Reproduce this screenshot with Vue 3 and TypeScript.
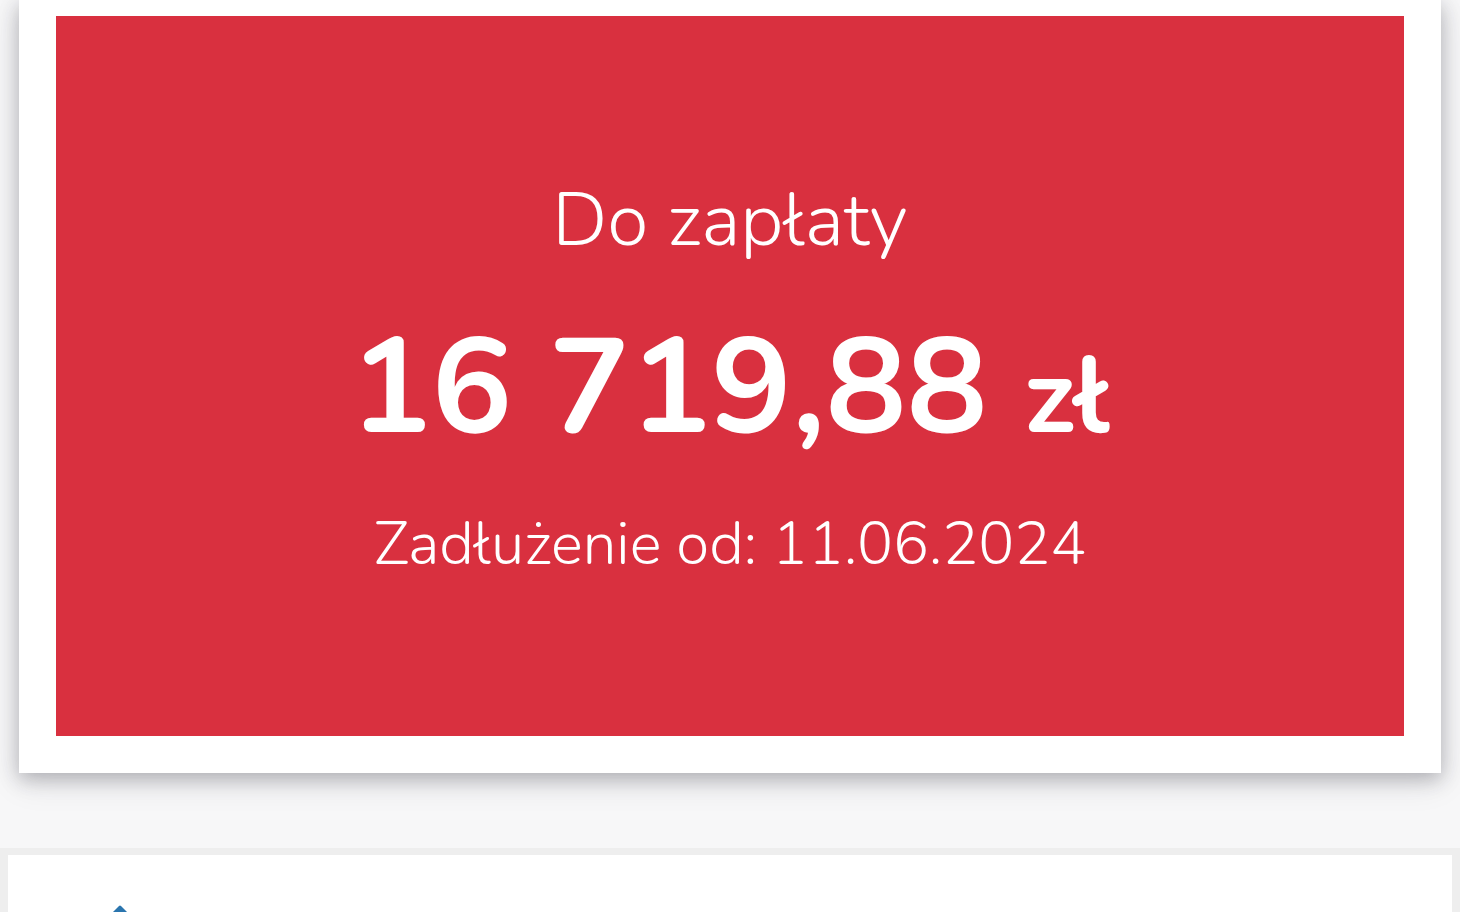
<script setup lang="ts">
interface Balance {
  label: string
  amount: string
  currency: string
  dueLabel: string
  dueDate: string
  dueIso: string
}

const balance: Balance = {
  label: 'Do zapłaty',
  amount: '16 719,88',
  currency: 'zł',
  dueLabel: 'Zadłużenie od:',
  dueDate: '11.06.2024',
  dueIso: '2024-06-11',
}
</script>

<template>
  <main class="page">
    <section class="card">
      <div class="balance">
        <h1 class="label">{{ balance.label }}</h1>
        <p class="amount">
          {{ balance.amount }} <span class="currency">{{ balance.currency }}</span>
        </p>
        <p class="due">
          {{ balance.dueLabel }} <time :datetime="balance.dueIso">{{ balance.dueDate }}</time>
        </p>
      </div>
    </section>
    <section class="next">
      <svg class="icon" viewBox="0 0 80 80" aria-hidden="true">
        <path d="M39 1 Q40 0 41 1 L80 40 L40 80 L0 40 Z" fill="#2a75ae" />
      </svg>
    </section>
  </main>
</template>

<style>
body {
  margin: 0;
  background: #f7f7f8;
}
</style>

<style scoped>
.page {
  display: flex;
  flex-direction: column;
  gap: 75px;
  height: 100vh;
  overflow: hidden;
  font-family: Nunito, Lato, "Open Sans", sans-serif;
  color: #fff;
}

.card {
  flex: none;
  margin: 0 19px;
  padding: 16px 37px 37px;
  background: #fff;
  box-shadow: 0 8px 32px rgba(40, 40, 60, 0.12), 0 6px 18px rgba(40, 40, 50, 0.28);
}

.balance {
  padding: 160px 24px 156px;
  background: #d9303f;
  text-align: center;
}

.label,
.amount,
.due {
  margin: 0;
}

.label {
  font-size: 75px;
  font-weight: 300;
  line-height: 88px;
}

.amount {
  margin-top: 44px;
  font-size: 135px;
  font-weight: 700;
  line-height: 160px;
}

.currency {
  font-size: 108px;
  line-height: 1;
}

.due {
  margin-top: 40px;
  font-size: 60px;
  font-weight: 300;
  line-height: 72px;
}

.next {
  flex: none;
  padding: 50px 72px;
  border: solid #eeeeee;
  border-width: 7px 8px;
  background: #fff;
}

.icon {
  display: block;
  width: 80px;
  height: 80px;
}
</style>
